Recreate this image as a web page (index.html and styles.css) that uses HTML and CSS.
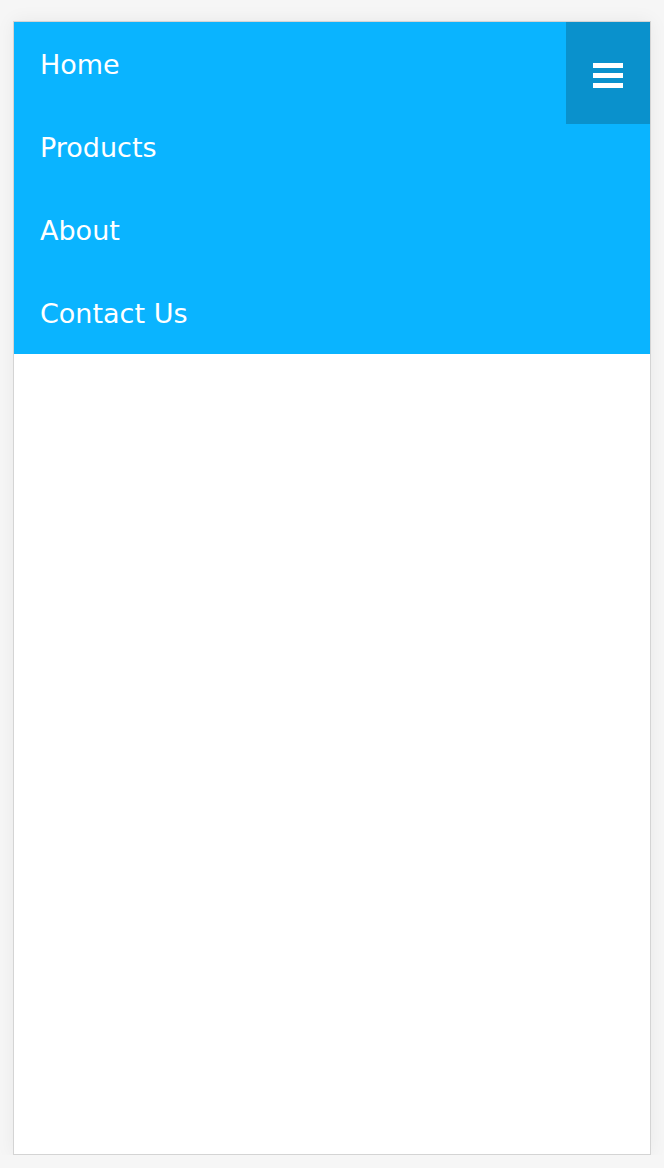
FILE: index.html
```html
<!DOCTYPE html>
<html>
<head>
<meta charset="utf-8">
<link rel="stylesheet" href="styles.css">
</head>
<body>
<div class="frame">
  <nav class="nav">
    <ul class="menu">
      <li class="item">Home</li>
      <li class="item">Products</li>
      <li class="item">About</li>
      <li class="item">Contact Us</li>
    </ul>
    <button class="toggle" aria-label="Menu">
      <span class="bar"></span>
      <span class="bar"></span>
      <span class="bar"></span>
    </button>
  </nav>
</div>
</body>
</html>
```
FILE: styles.css
```css
html, body {
  margin: 0;
  padding: 0;
}
body {
  background: #f6f6f6;
  font-family: "DejaVu Sans", Verdana, sans-serif;
}
.frame {
  margin: 21px 0 0 13px;
  width: 636px;
  height: 1132px;
  border: 1px solid #d4d4d4;
  background: #fff;
  box-shadow: 0 0 18px rgba(0, 0, 0, 0.06);
}
.nav {
  position: relative;
  background: #0ab4ff;
}
.menu {
  list-style: none;
  margin: 0;
  padding: 0;
}
.item {
  height: 83px;
  line-height: 81px;
  padding: 2px 0 0 26px;
  color: #fff;
  font-size: 27px;
  box-sizing: border-box;
}
.toggle {
  position: absolute;
  top: 0;
  right: 0;
  width: 84px;
  height: 102px;
  border: 0;
  padding: 4px 0 0;
  background: #0a91cc;
  display: flex;
  flex-direction: column;
  align-items: center;
  justify-content: center;
  gap: 5px;
}
.bar {
  display: block;
  width: 30px;
  height: 5px;
  background: #fff;
}
```
